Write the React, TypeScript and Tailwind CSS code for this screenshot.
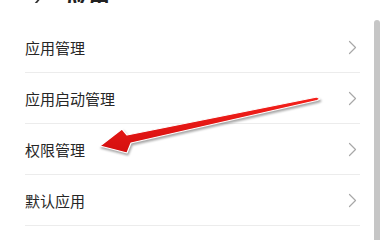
const items = ["应用管理", "应用启动管理", "权限管理", "默认应用"]

function Chevron() {
  return (
    <svg width="9" height="15" viewBox="0 0 9 15" fill="none">
      <path d="M1.5 1.5 L7.5 7.5 L1.5 13.5" stroke="#a8a8a8" strokeWidth="1.2" strokeLinecap="round" strokeLinejoin="round" />
    </svg>
  )
}

function Arrow() {
  return (
    <svg
      className="pointer-events-none absolute inset-0 drop-shadow-[1px_2px_1px_rgba(0,0,0,0.35)]"
      width="385"
      height="240"
      viewBox="0 0 385 240"
    >
      <defs>
        <linearGradient id="red" x1="0" y1="0" x2="0" y2="1">
          <stop offset="0" stopColor="#f5211b" />
          <stop offset="1" stopColor="#d40f0f" />
        </linearGradient>
      </defs>
      <polygon
        points="100,146 122,129 127,135 317,97 320,99 317,100.5 131,143 127,153"
        fill="url(#red)"
        stroke="#ffffff"
        strokeWidth="1.2"
        strokeLinejoin="round"
      />
    </svg>
  )
}

export default function App() {
  return (
    <div
      className="relative flex h-[240px] w-[385px] overflow-hidden bg-white"
      style={{ fontFamily: '"Noto Sans CJK SC", "Noto Sans", sans-serif' }}
    >
      <div className="flex w-[374px] flex-col">
        {/* page title, scrolled mostly out of view */}
        <div className="flex h-[3px] items-end gap-[26px] overflow-hidden pl-[31px]">
          <svg width="9" height="16" viewBox="0 0 9 16" fill="none" className="mb-[-12px]">
            <path d="M7.5 1 L1.5 8 L7.5 15" stroke="#333" strokeWidth="1.8" strokeLinecap="round" />
          </svg>
          <span className="mb-[-4px] text-[22px] font-bold leading-none text-[#222]">应用</span>
        </div>
        <div className="mt-[19px] flex flex-col pl-[25px] pr-[14px]">
          {items.map((label) => (
            <div
              key={label}
              className="flex h-[51px] items-center justify-between border-b border-[#ececec] pr-[3px] pt-[1px]"
            >
              <span className="text-[15px] leading-none text-[#262626]">{label}</span>
              <Chevron />
            </div>
          ))}
        </div>
      </div>
      <div className="mt-[20px] h-[240px] w-[6px] rounded-t-full bg-[#c6c6c6]" />
      <Arrow />
    </div>
  )
}
